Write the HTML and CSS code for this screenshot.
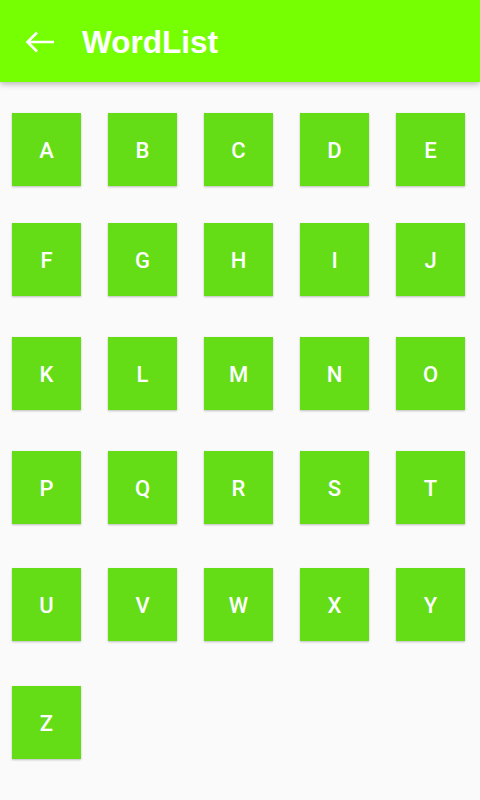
FILE: index.html
```html
<!DOCTYPE html>
<html>
   <head>
      <title>WordList</title>
      <link rel="stylesheet" href="styles.css">
   </head>
   <body>

   <div class="appbar">
      <svg class="back" width="32" height="24" viewBox="0 0 32 24">
         <path d="M3 12H30M13 2.5L3.5 12L13 21.5" fill="none" stroke="#fff" stroke-width="2.6"/>
      </svg>
      <h1>WordList</h1>
   </div>

   <div class="letters">
      <div class="tile">A</div>
      <div class="tile">B</div>
      <div class="tile">C</div>
      <div class="tile">D</div>
      <div class="tile">E</div>
      <div class="tile">F</div>
      <div class="tile">G</div>
      <div class="tile">H</div>
      <div class="tile">I</div>
      <div class="tile">J</div>
      <div class="tile">K</div>
      <div class="tile">L</div>
      <div class="tile">M</div>
      <div class="tile">N</div>
      <div class="tile">O</div>
      <div class="tile">P</div>
      <div class="tile">Q</div>
      <div class="tile">R</div>
      <div class="tile">S</div>
      <div class="tile">T</div>
      <div class="tile">U</div>
      <div class="tile">V</div>
      <div class="tile">W</div>
      <div class="tile">X</div>
      <div class="tile">Y</div>
      <div class="tile">Z</div>
   </div>
   </body>
</html>
```

FILE: styles.css
```css
body { margin:0; background:#fafafa; height:800px; overflow:hidden;
       font-family:Roboto, "Liberation Sans", sans-serif; }
.appbar { height:82px; background:#76ff03; display:flex; align-items:center;
          box-shadow:0 2px 6px rgba(0,0,0,0.28); position:relative; }
.back { margin-left:24px; margin-top:1px; }
h1 { margin:0 0 0 26px; color:#fff; font-family:"Liberation Sans", Arial, sans-serif;
     font-weight:bold; font-size:31.5px; padding-top:2px; }
.letters { display:grid; grid-template-columns:repeat(5, 69px); column-gap:27px;
           grid-template-rows:110px 114px 114px 117px 118px 73px;
           padding:31px 0 0 12px; align-items:start; }
.tile { height:73px; background:#64dd17; color:#fff; font-size:22px; font-weight:500;
        display:flex; align-items:center; justify-content:center; padding-top:2px;
        box-sizing:border-box; box-shadow:0 1px 2px rgba(0,0,0,0.25); }
```
